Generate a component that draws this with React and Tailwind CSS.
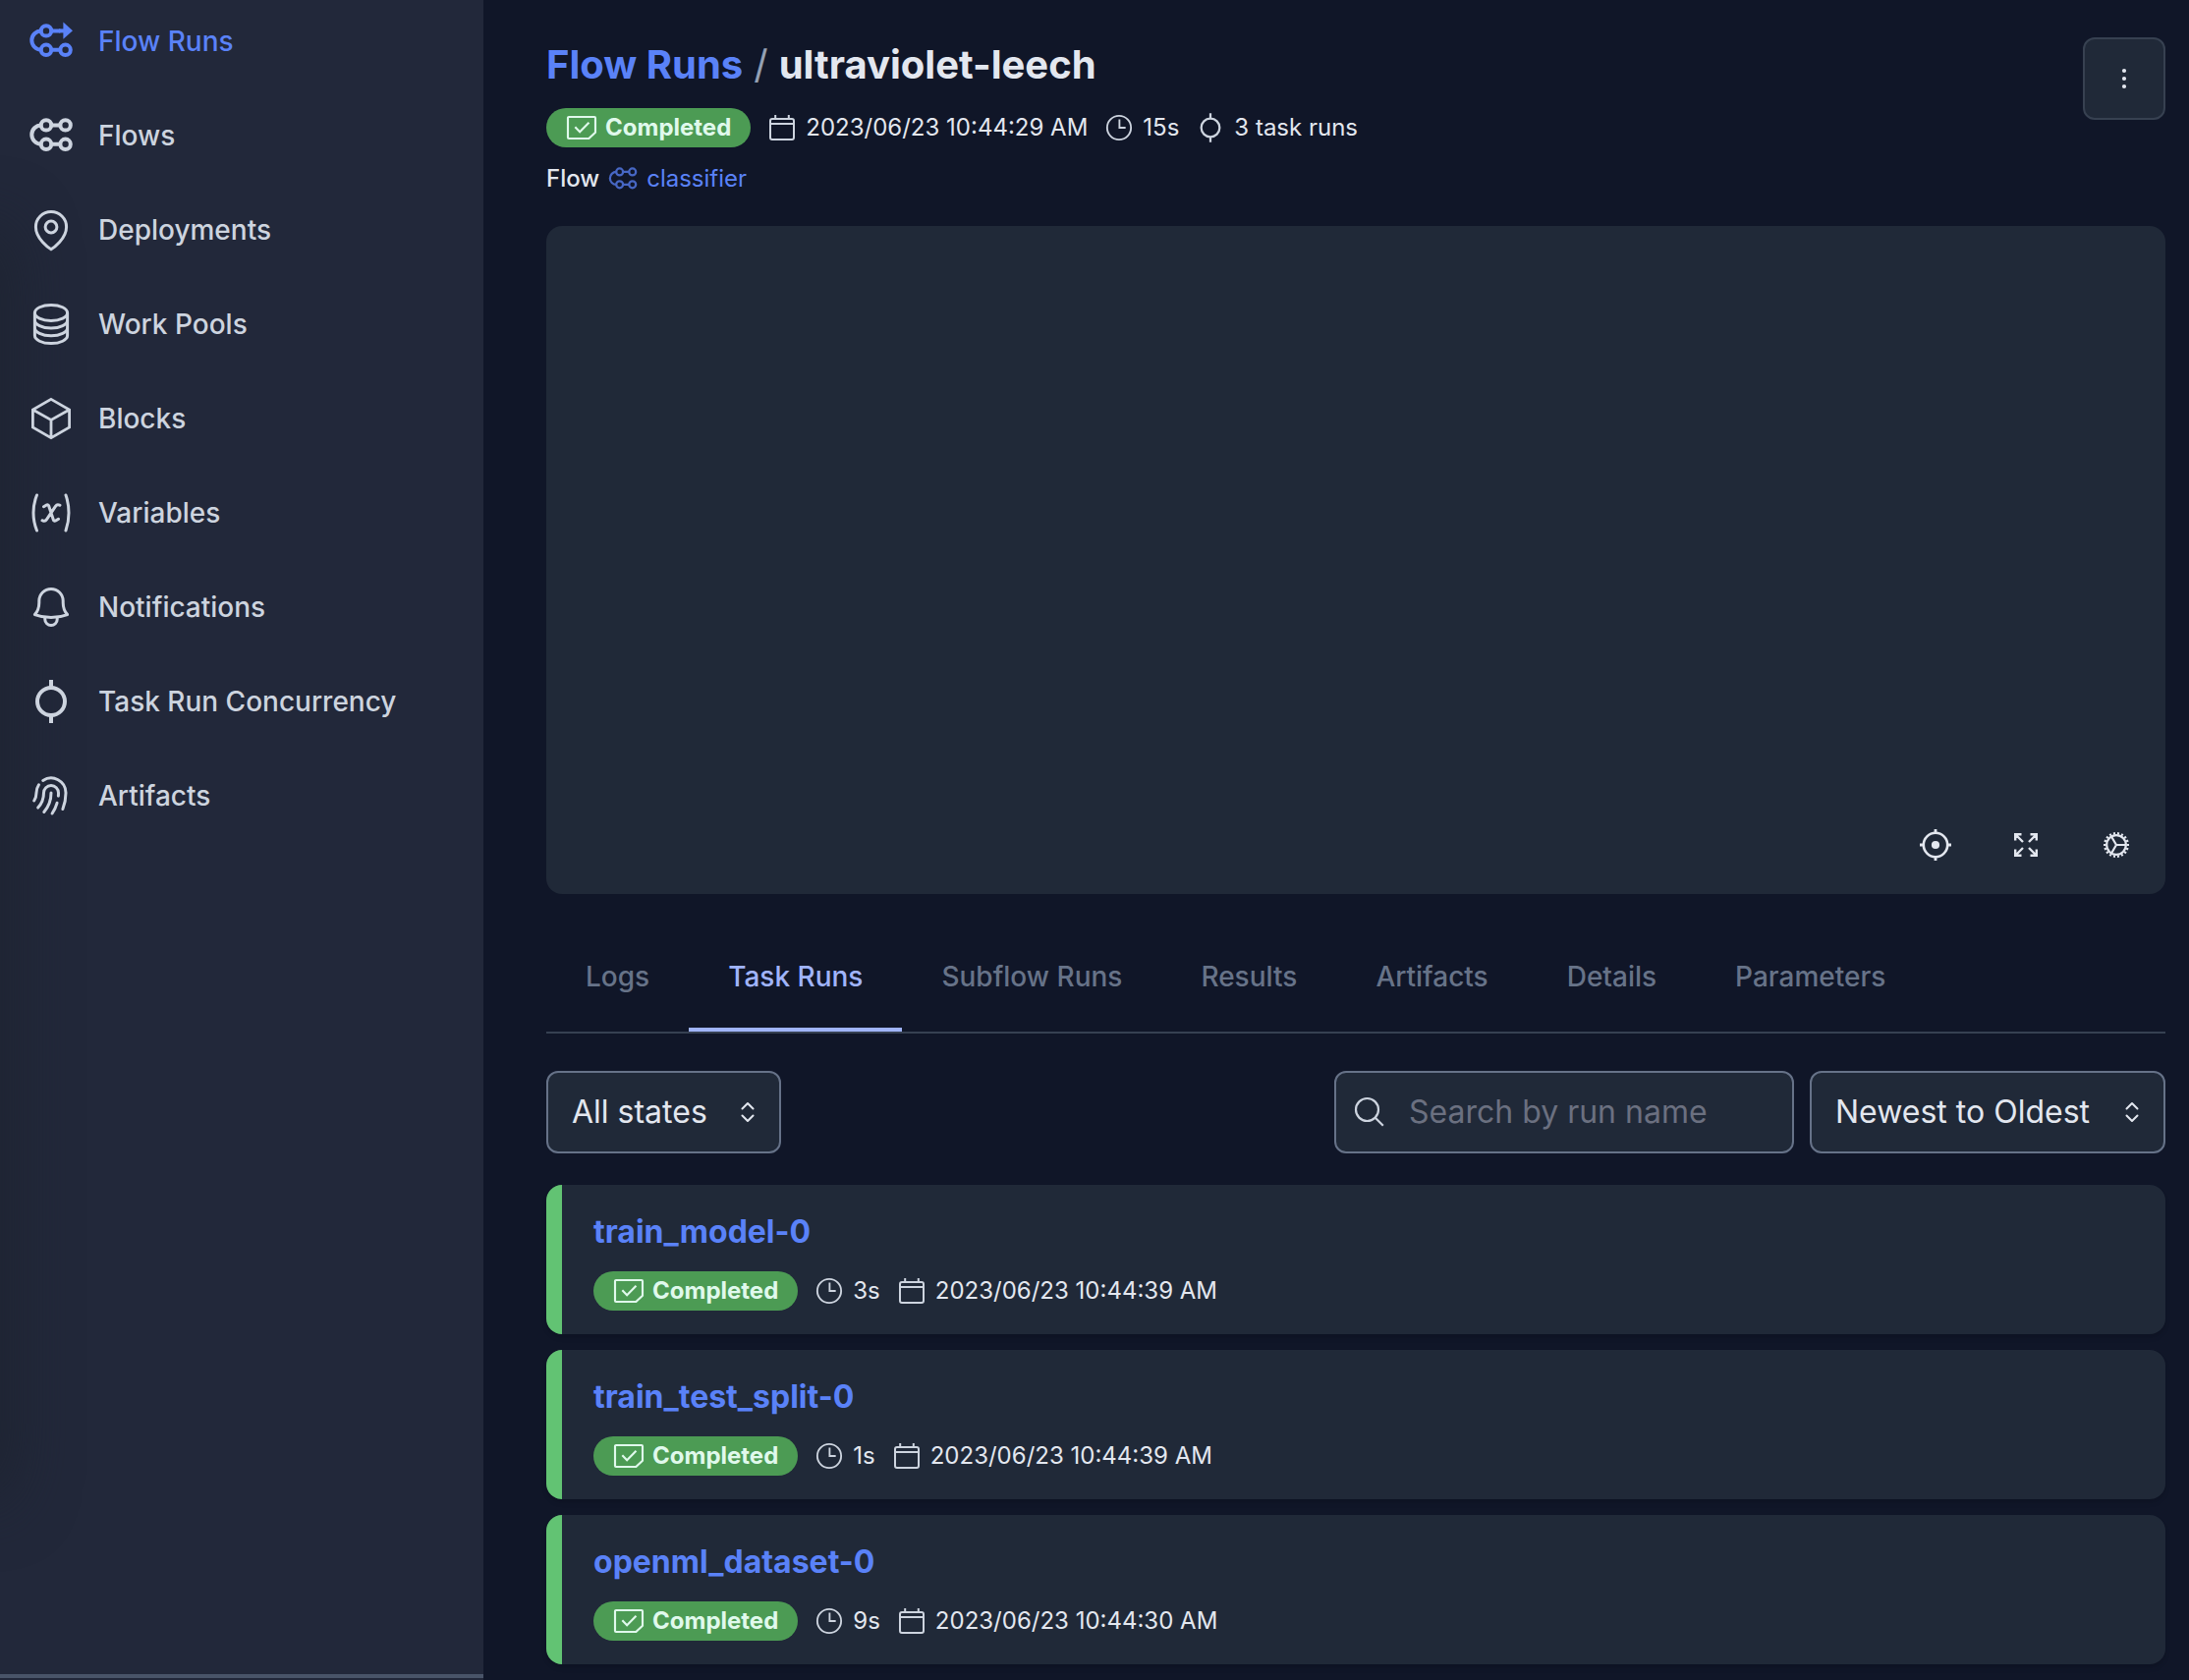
import React from "react";

function Icon({ className = "size-8", stroke = 1.5, children }) {
  return (
    <svg
      className={`shrink-0 ${className}`}
      viewBox="0 0 24 24"
      fill="none"
      stroke="currentColor"
      strokeWidth={stroke}
      aria-hidden="true"
    >
      {children}
    </svg>
  );
}

const FlowNodes = ({ children }) => (
  <>
    <path d="M7 6.7a4.85 4.85 0 0 0 0 9.7" />
    <circle cx="9.5" cy="6.7" r="2.6" />
    <circle cx="9.5" cy="16.4" r="2.6" />
    <circle cx="19.3" cy="16.4" r="2.6" />
    <path d="M12.1 16.4h4.6M12.1 6.7h4.6" />
    {children}
  </>
);

const FlowRunsIcon = (p) => (
  <Icon stroke={2} {...p}>
    <FlowNodes>
      <path d="M16 6.7h3" />
      <path d="M18.2 2.3v8.6L23 6.6z" fill="currentColor" stroke="none" />
    </FlowNodes>
  </Icon>
);

const FlowIcon = (p) => (
  <Icon stroke={2} {...p}>
    <FlowNodes>
      <circle cx="19.3" cy="6.7" r="2.6" />
    </FlowNodes>
  </Icon>
);

const PinIcon = (p) => (
  <Icon stroke={1.5} {...p}>
    <path d="M12 21.9C11 21.3 4.2 16.6 4.2 10.5a7.8 7.8 0 0 1 15.6 0c0 6.1-6.8 10.8-7.8 11.4z" />
    <circle cx="12" cy="10.5" r="2.95" />
  </Icon>
);

const DatabaseIcon = (p) => (
  <Icon stroke={1.5} {...p}>
    <ellipse cx="12" cy="6.2" rx="8.3" ry="4" />
    <path d="M3.7 6.2v11.6c0 2.2 3.7 4 8.3 4s8.3-1.8 8.3-4V6.2" />
    <path d="M3.7 10c0 2.2 3.7 4 8.3 4s8.3-1.8 8.3-4M3.7 13.9c0 2.2 3.7 4 8.3 4s8.3-1.8 8.3-4" />
  </Icon>
);

const CubeIcon = (p) => (
  <Icon stroke={1.4} {...p}>
    <path d="M12 2.2l9.3 5.3v9L12 21.8l-9.3-5.3v-9zM2.7 7.5l9.3 5.2 9.3-5.2M12 12.7v9.1" />
  </Icon>
);

const VariableIcon = (p) => (
  <Icon stroke={1.5} {...p}>
    <path
      strokeLinecap="round"
      strokeLinejoin="round"
      d="M4.745 3A23.933 23.933 0 003 12c0 3.183.62 6.22 1.745 9M19.5 3c.967 2.78 1.5 5.817 1.5 9s-.533 6.22-1.5 9M8.25 8.885l1.444-.89a.75.75 0 011.105.402l2.402 7.206a.75.75 0 001.104.401l1.445-.889m-8.25.75l.213.09a1.687 1.687 0 002.062-.617l4.45-6.676a1.688 1.688 0 012.062-.618l.213.09"
    />
  </Icon>
);

const BellIcon = (p) => (
  <Icon stroke={1.5} {...p}>
    <path
      strokeLinejoin="round"
      d="M12 2.7a6.1 6.1 0 0 0-6.1 6.1v.9c0 2.5-.8 4.5-2.2 6.1 2.6 1 5.400 1.500 8.300 1.500s5.700-.5 8.300-1.500c-1.400-1.600-2.200-3.600-2.200-6.100v-.9A6.100 6.100 0 0 0 12 2.700z"
    />
    <path d="M8.900 17.300v.9a3.100 3.100 0 0 0 6.200 0v-.9" />
  </Icon>
);

const TaskIcon = (p) => (
  <Icon stroke={2} {...p}>
    <circle cx="12" cy="12" r="7" />
    <path d="M12 1v4M12 19v4" />
  </Icon>
);

const SmallTaskIcon = (p) => <TaskIcon stroke={1.7} {...p} />;

const FingerprintIcon = (p) => (
  <Icon stroke={1.5} {...p}>
    <path
      strokeLinecap="round"
      strokeLinejoin="round"
      d="M7.864 4.243A7.5 7.5 0 0119.5 10.5c0 2.92-.556 5.709-1.568 8.268M5.742 6.364A7.465 7.465 0 004.5 10.5a7.464 7.464 0 01-1.15 3.993m1.989 3.559A11.209 11.209 0 008.25 10.5a3.75 3.75 0 117.5 0c0 .527-.021 1.049-.064 1.565M12 10.5a14.94 14.94 0 01-3.6 9.75m6.633-4.596a18.666 18.666 0 01-2.485 5.33"
    />
  </Icon>
);

const CompletedIcon = (p) => (
  <Icon stroke={1.6} {...p}>
    <path
      strokeLinejoin="round"
      d="M1.5 4.5a.75.75 0 0 1 .75-.75h19.5a.75.75 0 0 1 .75.75v11L17.5 20.25H2.250a.75.75 0 0 1-.75-.75z"
    />
    <path d="M7 11.5l3.6 3.600L17.600 8" />
  </Icon>
);

const CalendarIcon = (p) => (
  <Icon stroke={1.5} {...p}>
    <rect x="3" y="5.2" width="18" height="15.8" rx="1.5" />
    <path d="M3 9h18M6.9 2.2v3M17.1 2.2v3" />
  </Icon>
);

const ClockIcon = (p) => (
  <Icon stroke={1.4} {...p}>
    <circle cx="12" cy="12" r="9.1" />
    <path d="M12.3 5.7V12H17" />
  </Icon>
);

const NAV = [
  { label: "Flow Runs", icon: FlowRunsIcon, active: true },
  { label: "Flows", icon: FlowIcon },
  { label: "Deployments", icon: PinIcon },
  { label: "Work Pools", icon: DatabaseIcon },
  { label: "Blocks", icon: CubeIcon },
  { label: "Variables", icon: VariableIcon },
  { label: "Notifications", icon: BellIcon },
  { label: "Task Run Concurrency", icon: TaskIcon },
  { label: "Artifacts", icon: FingerprintIcon },
];

const TABS = ["Logs", "Task Runs", "Subflow Runs", "Results", "Artifacts", "Details", "Parameters"];

const RUNS = [
  { name: "train_model-0", duration: "3s", time: "2023/06/23 10:44:39 AM" },
  { name: "train_test_split-0", duration: "1s", time: "2023/06/23 10:44:39 AM" },
  { name: "openml_dataset-0", duration: "9s", time: "2023/06/23 10:44:30 AM" },
];

function Sidebar() {
  return (
    <aside className="relative flex flex-col overflow-hidden bg-[#22283a]">
      <div className="absolute top-60 bottom-48 -left-10 w-10 rounded-full shadow-[0_0_64px_12px_#1e2431]" />
      <nav className="relative flex flex-1 flex-col gap-4 pt-0.5" aria-label="Main">
        {NAV.map(({ label, icon: NavIcon, active }) => (
          <a
            key={label}
            href="#"
            aria-current={active ? "page" : undefined}
            className={`flex h-20 items-center gap-6 px-7 text-[28px] leading-10 font-medium ${
              active ? "text-[#5a82f8]" : "text-[#cdd4df]"
            }`}
          >
            <NavIcon className="size-12" />
            {label}
          </a>
        ))}
      </nav>
      <div className="mb-0.5 h-1 bg-[#495468]" />
    </aside>
  );
}

function StatusBadge() {
  return (
    <span className="flex h-10 items-center gap-2 rounded-full bg-[#4c9b54] px-5 font-bold text-[#e0f9ec]">
      <CompletedIcon />
      Completed
    </span>
  );
}

function Meta({ icon: MetaIcon, children }) {
  return (
    <span className="flex items-center gap-2">
      <MetaIcon className="size-8 text-[#cdd4df]" />
      {children}
    </span>
  );
}

function Header() {
  return (
    <header className="flex items-start justify-between">
      <div className="text-2xl leading-9 text-[#e3e7ef]">
        <h1 className="flex gap-[11px] text-[40px] leading-[56px] font-bold">
          <a href="#" className="text-[#5a82f8]">
            Flow Runs
          </a>
          <span className="font-normal text-[#94a0b4]">/</span>
          <span>ultraviolet-leech</span>
        </h1>
        <div className="mt-4 flex items-center gap-4">
          <StatusBadge />
          <Meta icon={CalendarIcon}>2023/06/23 10:44:29 AM</Meta>
          <Meta icon={ClockIcon}>15s</Meta>
          <Meta icon={SmallTaskIcon}>3 task runs</Meta>
        </div>
        <div className="mt-3.5 flex items-center gap-2">
          <span className="font-medium">Flow</span>
          <a href="#" className="flex items-center gap-2 text-[#5a82f8]">
            <FlowIcon stroke={1.7} className="size-8 opacity-75" />
            classifier
          </a>
        </div>
      </div>
      <button
        type="button"
        aria-label="Flow run actions"
        className="flex size-[84px] items-center justify-center rounded-xl border-2 border-[#374151] bg-[#202938] text-[#e3e7ef]"
      >
        <svg className="size-8" viewBox="0 0 32 32" fill="currentColor" aria-hidden="true">
          <circle cx="16" cy="8" r="2.1" />
          <circle cx="16" cy="16" r="2.1" />
          <circle cx="16" cy="24" r="2.1" />
        </svg>
      </button>
    </header>
  );
}

function GraphControl({ label, children }) {
  return (
    <button type="button" aria-label={label} className="flex size-[84px] items-center justify-center">
      <svg
        className="size-8"
        viewBox="0 0 32 32"
        fill="none"
        stroke="currentColor"
        strokeWidth="2.4"
        aria-hidden="true"
      >
        {children}
      </svg>
    </button>
  );
}

function GraphPanel() {
  return (
    <section
      aria-label="Flow run graph"
      className="mt-[30px] flex h-[680px] items-end justify-end gap-2 rounded-2xl bg-[#202938] p-2 text-[#e3e7ef]"
    >
      <GraphControl label="Recenter">
        <circle cx="16" cy="16" r="12.2" strokeWidth="2.6" />
        <circle cx="16" cy="16" r="4.1" fill="currentColor" stroke="none" />
        <path d="M16 0v4M16 28v4M0 16h4M28 16h4" strokeWidth="2.8" />
      </GraphControl>
      <GraphControl label="Full screen">
        <path d="M5.2 11.5V5.2h6.300M5 5l8 8M20.500 5.200h6.300v6.300M27 5l-8 8M5.200 20.500v6.300h6.300M5 27l8-8M26.800 20.500v6.300h-6.300M27 27l-8-8" />
      </GraphControl>
      <GraphControl label="Settings">
        <circle cx="16" cy="16" r="9.8" strokeWidth="2.200" />
        <circle
          cx="16"
          cy="16"
          r="11.800"
          strokeWidth="2.400"
          pathLength="36"
          strokeDasharray="1 1"
          strokeDashoffset="0.5"
        />
        <path d="M16 16h9.500M16 16l-4.800-8.200M16 16l-4.800 8.200" strokeWidth="2.200" />
      </GraphControl>
    </section>
  );
}

function Tabs() {
  return (
    <div role="tablist" className="mt-7 flex border-b-2 border-[#364152]">
      {TABS.map((tab) => {
        const selected = tab === "Task Runs";
        return (
          <button
            key={tab}
            type="button"
            role="tab"
            aria-selected={selected}
            className={`h-28 border-y-4 border-t-transparent px-10 text-[28px] leading-10 font-medium ${
              selected ? "border-b-[#a0b4fb] text-[#a0b4fb]" : "border-b-transparent text-[#677388]"
            }`}
          >
            {tab}
          </button>
        );
      })}
    </div>
  );
}

function Select({ label, options, className }) {
  return (
    <div className={`relative ${className}`}>
      <select
        aria-label={label}
        className="h-[84px] w-full appearance-none rounded-xl border-2 border-[#667288] bg-[#202938] pr-16 pl-6 text-[32px] text-[#e3e7ef]"
      >
        {options.map((o) => (
          <option key={o}>{o}</option>
        ))}
      </select>
      <svg
        className="pointer-events-none absolute inset-y-0 right-[18px] my-auto size-8"
        viewBox="0 0 32 32"
        fill="none"
        stroke="#e3e7ef"
        strokeWidth="2"
        strokeLinecap="round"
        strokeLinejoin="round"
        aria-hidden="true"
      >
        <path d="M10.500 12.500L16 7l5.500 5.500M10.500 19.500L16 25l5.500-5.500" />
      </svg>
    </div>
  );
}

function Filters() {
  return (
    <div className="mt-[38px] flex items-center gap-4">
      <Select label="State" options={["All states"]} className="mr-auto w-[239px]" />
      <label className="flex h-[84px] w-[468px] items-center gap-6 rounded-xl border-2 border-[#667288] bg-[#202938] px-[18px]">
        <svg
          className="size-8 shrink-0"
          viewBox="0 0 32 32"
          fill="none"
          stroke="#cdd4df"
          strokeWidth="2.200"
          aria-hidden="true"
        >
          <circle cx="13.500" cy="13.500" r="11.500" />
          <path d="M21.800 21.800l8 8" />
        </svg>
        <input
          type="search"
          aria-label="Search by run name"
          placeholder="Search by run name"
          className="w-full min-w-0 bg-transparent text-[32px] leading-10 text-[#e3e7ef] outline-none placeholder:text-[#6b7080]"
        />
      </label>
      <Select label="Sort order" options={["Newest to Oldest"]} className="w-[362px]" />
    </div>
  );
}

function RunCard({ name, duration, time }) {
  return (
    <li className="flex overflow-hidden rounded-2xl bg-[#202938] shadow-md">
      <div className="w-4 shrink-0 bg-[#62c373]" />
      <div className="px-8 py-6">
        <h2 className="text-[32px] leading-[48px] font-bold">
          <a href="#" className="text-[#5a82f8]">
            {name}
          </a>
        </h2>
        <div className="mt-4 flex items-center gap-4 text-2xl leading-9 text-[#e3e7ef]">
          <StatusBadge />
          <Meta icon={ClockIcon}>{duration}</Meta>
          <Meta icon={CalendarIcon}>{time}</Meta>
        </div>
      </div>
    </li>
  );
}

export default function App() {
  return (
    <div className="grid min-h-screen grid-cols-[492px_1fr] bg-[#101628] font-['Inter',sans-serif]">
      <Sidebar />
      <main className="min-w-0 pt-[38px] pr-6 pb-4 pl-16">
        <Header />
        <GraphPanel />
        <Tabs />
        <Filters />
        <ul className="mt-8 flex flex-col gap-4">
          {RUNS.map((run) => (
            <RunCard key={run.name} {...run} />
          ))}
        </ul>
      </main>
    </div>
  );
}
